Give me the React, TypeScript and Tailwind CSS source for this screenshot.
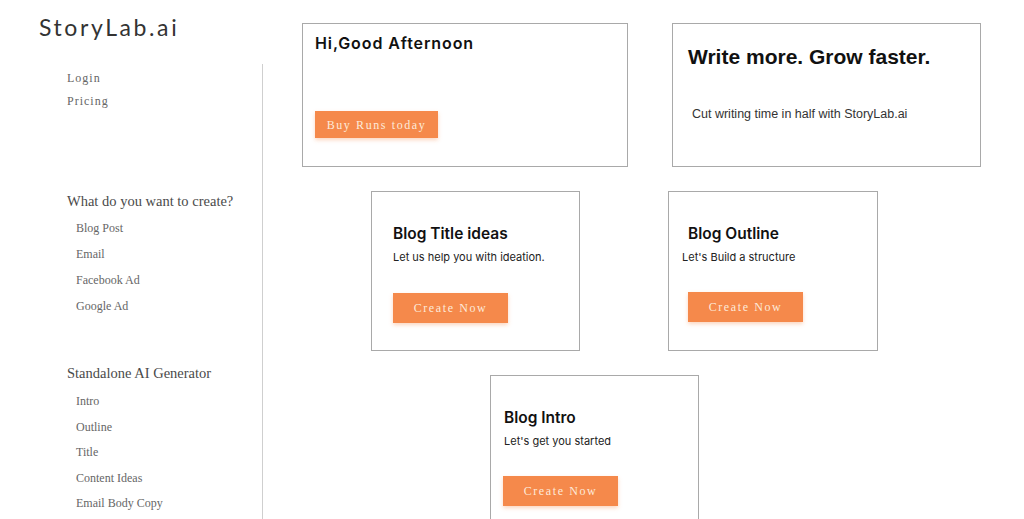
import React from "react";

const serif = "font-['Liberation_Serif','DejaVu_Serif',serif]";

function Btn({ label, w, h }: { label: string; w: string; h: string }) {
  return (
    <div
      className={`${w} ${h} bg-[#f5894b] flex items-center justify-center text-[#fde9da] text-[12px] tracking-[1.6px] ${serif} shadow-[0_2px_4px_rgba(245,137,75,0.35)]`}
    >
      {label}
    </div>
  );
}

function SmallCard({
  title,
  sub,
  className,
  titleIndent = "pl-[21px]",
  subIndent = "pl-[21px]",
  btnIndent = "pl-[21px]",
  btnTop = "mt-[27px]",
}: {
  title: string;
  sub: string;
  className: string;
  titleIndent?: string;
  subIndent?: string;
  btnIndent?: string;
  btnTop?: string;
}) {
  return (
    <div className={`border border-[#a9a9a9] bg-white flex flex-col ${className}`}>
      <div className={`mt-[32px] ${titleIndent} text-[15.5px] leading-[20px] font-semibold text-[#111] font-['Inter',sans-serif]`}>
        {title}
      </div>
      <div className={`mt-[5px] ${subIndent} text-[11px] leading-[16px] text-[#222] font-['Inter',sans-serif]`}>
        {sub}
      </div>
      <div className={`${btnTop} ${btnIndent}`}>
        <Btn label="Create Now" w="w-[115px]" h="h-[30px]" />
      </div>
    </div>
  );
}

export default function App() {
  const create = ["Blog Post", "Email", "Facebook Ad", "Google Ad"];
  const standalone = ["Intro", "Outline", "Title", "Content Ideas", "Email Body Copy"];
  return (
    <div className="w-[1024px] h-[519px] overflow-hidden bg-white flex">
      {/* Sidebar */}
      <div className="w-[263px] h-full flex flex-col shrink-0">
        <div className="h-[64px] pl-[39px] pt-[12px]">
          <div className="text-[23px] leading-[30px] tracking-[2.6px] text-[#333] font-['Lato',sans-serif]">
            StoryLab.ai
          </div>
        </div>
        <div className={`flex-1 border-r border-[#cfcfcf] pl-[67px] pt-[3px] ${serif}`}>
          <div className="text-[12px] leading-[23px] tracking-[1px] text-[#666]">Login</div>
          <div className="text-[12px] leading-[23px] tracking-[1px] text-[#666]">Pricing</div>
          <div className="mt-[75px] text-[14.5px] leading-[26px] text-[#4a4a4a]">What do you want to create?</div>
          <div className="pl-[9px] pt-[1px]">
            {create.map((c) => (
              <div key={c} className="text-[12px] leading-[26px] text-[#666]">
                {c}
              </div>
            ))}
          </div>
          <div className="mt-[41px] text-[14.5px] leading-[26px] text-[#4a4a4a]">Standalone AI Generator</div>
          <div className="pl-[9px] mt-[3px]">
            {standalone.map((c) => (
              <div key={c} className="text-[12px] leading-[25.6px] text-[#666] whitespace-nowrap">
                {c}
              </div>
            ))}
          </div>
        </div>
      </div>

      {/* Main */}
      <div className="flex-1 flex flex-col">
        <div className="flex mt-[23px]">
          <div className="ml-[39px] w-[326px] h-[144px] border border-[#a9a9a9] flex flex-col">
            <div className="mt-[9px] pl-[12px] text-[16px] leading-[20px] font-semibold tracking-[0.9px] text-[#111] font-['Inter',sans-serif]">
              Hi,Good Afternoon
            </div>
            <div className="mt-[58px] pl-[12px]">
              <Btn label="Buy Runs today" w="w-[123px]" h="h-[27px]" />
            </div>
          </div>
          <div className="ml-[44px] w-[309px] h-[144px] border border-[#a9a9a9] flex flex-col">
            <div className="mt-[20px] pl-[15px] text-[21px] leading-[26px] font-bold text-[#111] font-['Liberation_Sans',Arial,sans-serif]">
              Write more. Grow faster.
            </div>
            <div className="mt-[36px] pl-[19px] text-[12.5px] leading-[16px] text-[#333] font-['Liberation_Sans',Arial,sans-serif]">
              Cut writing time in half with StoryLab.ai
            </div>
          </div>
        </div>

        <div className="flex mt-[24px]">
          <SmallCard
            title="Blog Title ideas"
            sub="Let us help you with ideation."
            className="ml-[108px] w-[209px] h-[160px]"
            btnTop="mt-[28px]"
          />
          <SmallCard
            title="Blog Outline"
            sub="Let's Build a structure"
            className="ml-[88px] w-[210px] h-[160px]"
            titleIndent="pl-[19px]"
            subIndent="pl-[13px]"
            btnIndent="pl-[19px]"
          />
        </div>

        <div className="flex mt-[24px]">
          <SmallCard
            title="Blog Intro"
            sub="Let's get you started"
            className="ml-[227px] w-[209px] h-[160px]"
            titleIndent="pl-[13px]"
            subIndent="pl-[13px]"
            btnIndent="pl-[12px]"
          />
        </div>
      </div>
    </div>
  );
}
